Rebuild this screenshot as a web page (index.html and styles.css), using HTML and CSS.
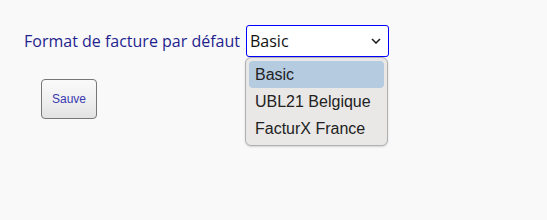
FILE: index.html
```html
<!DOCTYPE html>
<html lang="fr">
<head>
    <meta charset="UTF-8">
    <title>Format de facture</title>
    <link rel="stylesheet" href="styles.css">
</head>
<body>
    <form class="settings">
        <div class="row">
            <label class="label" for="format">Format de facture par défaut</label>
            <div class="picker">
                <div class="select" id="format">
                    <span>Basic</span>
                    <svg class="chevron" width="10" height="6" viewBox="0 0 10 6"><path d="M1 1 L5 5 L9 1" fill="none" stroke="#222" stroke-width="1.6"/></svg>
                </div>
                <ul class="options">
                    <li class="selected">Basic</li>
                    <li>UBL21 Belgique</li>
                    <li>FacturX France</li>
                </ul>
            </div>
        </div>
        <button type="button" class="save">Sauve</button>
    </form>
</body>
</html>
```

FILE: styles.css
```css
html,
body {
    margin: 0;
    height: 100%;
}
body {
    background: #f9f9f9;
    font-family: "Open Sans", "Noto Sans", sans-serif;
}
.settings {
    padding: 25px 0 0 24px;
}
.row {
    display: flex;
    align-items: center;
}
.label {
    color: #1f1f8f;
    font-size: 16px;
    margin-right: 6px;
}
.picker {
    position: relative;
}
.select {
    box-sizing: border-box;
    width: 143px;
    height: 32px;
    border: 1px solid #0000ff;
    border-radius: 3px;
    background: #fff;
    display: flex;
    align-items: center;
    justify-content: space-between;
    padding: 0 7px 0 3px;
    font-size: 16px;
    color: #111;
}
.options {
    position: absolute;
    top: 32px;
    left: -1px;
    box-sizing: border-box;
    width: 143px;
    margin: 0;
    padding: 3px;
    list-style: none;
    background: #e9e8e6;
    border: 1px solid #b0b0b0;
    border-radius: 6px;
    box-shadow: 0 1px 2px rgba(0,0,0,0.15);
    font-family: "Liberation Sans", Arial, sans-serif;
    font-size: 16px;
    color: #222;
}
.options li {
    height: 27px;
    line-height: 28px;
    padding-left: 6px;
    border-radius: 4px;
}
.options li.selected {
    background: #b5cbe0;
}
.save {
    margin: 22px 0 0 17px;
    width: 56px;
    height: 40px;
    border: 1px solid #777;
    border-radius: 4px;
    background: linear-gradient(#fafafa, #f0f0f0 50%, #e2e2e2);
    color: #3838b0;
    font-family: "Liberation Sans", Arial, sans-serif;
    font-size: 12px;
}
```
